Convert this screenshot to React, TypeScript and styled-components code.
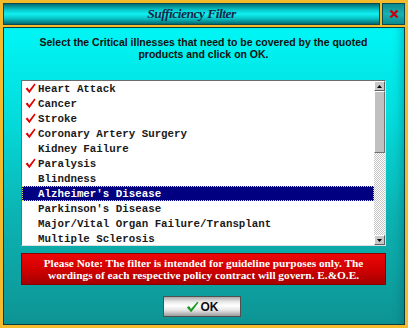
import { createGlobalStyle } from 'styled-components';
import styled from 'styled-components';

const GlobalStyle = createGlobalStyle`
  html, body {
    margin: 0;
    padding: 0;
    overflow: hidden;
    background: #ffffff;
  }
  * {
    box-sizing: border-box;
  }
`;

const Window = styled.div`
  width: 408px;
  height: 328px;
  padding: 3px;
  background: #f4bc2c;
  display: grid;
  grid-template-rows: 22px 1fr;
  gap: 2px;
`;

const TitleRow = styled.div`
  display: grid;
  grid-template-columns: 1fr 23px;
  gap: 2px;
`;

const TitleBar = styled.div`
  display: flex;
  align-items: center;
  justify-content: center;
  border: 1px solid #0a4a50;
  background: linear-gradient(
    to bottom,
    #036e74 0%,
    #08c8cc 30%,
    #12f0f0 50%,
    #08c4c8 72%,
    #036a70 100%
  );
  font-family: 'Liberation Serif', 'Times New Roman', serif;
  font-weight: bold;
  font-style: italic;
  font-size: 13.5px;
  letter-spacing: -0.5px;
  color: #142848;
`;

const CloseButton = styled.button`
  display: flex;
  align-items: center;
  justify-content: center;
  padding: 0;
  border: 1px solid #0a4a50;
  background: linear-gradient(to bottom, #0c8a8e, #18b2b4 50%, #0c8a8e);
  cursor: pointer;
`;

const Body = styled.div`
  display: flex;
  flex-direction: column;
  align-items: stretch;
  padding: 0 18px 0 17px;
  border: 1px solid #0a3c40;
  background: linear-gradient(to bottom, #00f6f6 0%, #04dcdc 30%, #0cb4b4 62%, #0e9494 100%);
  box-shadow: inset -7px 0 8px -5px rgba(0, 70, 80, 0.35);
`;

const Instruction = styled.div`
  margin: 8px 0 20px;
  text-align: center;
  font-family: 'Liberation Sans', Arial, sans-serif;
  font-weight: bold;
  font-size: 10.5px;
  line-height: 12px;
  color: #101010;
`;

const ListBox = styled.div`
  height: 166px;
  display: flex;
  background: #ffffff;
  border-top: 1px solid #6c6c6c;
  border-left: 1px solid #6c6c6c;
  border-right: 1px solid #e0e0e0;
  border-bottom: 1px solid #e0e0e0;
`;

const Items = styled.div`
  flex: 1;
  overflow: hidden;
`;

const Row = styled.div<{ $selected: boolean }>`
  height: 15px;
  display: flex;
  align-items: center;
  padding-left: 3px;
  background: ${p => (p.$selected ? '#000080' : 'transparent')};
  color: ${p => (p.$selected ? '#ffffff' : '#1a1a1a')};
  outline: ${p => (p.$selected ? '1px dotted #f0e040' : 'none')};
  outline-offset: -1px;
  font-family: 'Liberation Mono', 'Courier New', monospace;
  font-weight: bold;
  font-size: 10.8px;
  white-space: nowrap;
`;

const CheckCell = styled.span`
  width: 13px;
  height: 15px;
  display: flex;
  align-items: center;
  flex-shrink: 0;
`;

const Scrollbar = styled.div`
  width: 11px;
  display: flex;
  flex-direction: column;
  background-color: #ffffff;
  background-image: conic-gradient(#c4c4c4 25%, #ffffff 0 50%, #c4c4c4 0 75%, #ffffff 0);
  background-size: 2px 2px;
`;

const ArrowButton = styled.div`
  height: 10px;
  display: flex;
  align-items: center;
  justify-content: center;
  background: #c8c8c8;
  border-top: 1px solid #ffffff;
  border-left: 1px solid #ffffff;
  border-right: 1px solid #606060;
  border-bottom: 1px solid #606060;
`;

const Thumb = styled.div`
  height: 62px;
  background: #c0c0c0;
  border-top: 1px solid #ffffff;
  border-left: 1px solid #ffffff;
  border-right: 1px solid #707070;
  border-bottom: 1px solid #707070;
`;

const Track = styled.div`
  flex: 1;
`;

const NoteBox = styled.div`
  margin-top: 7px;
  height: 32px;
  display: flex;
  align-items: center;
  justify-content: center;
  text-align: center;
  border: 1px solid #8a0000;
  background: linear-gradient(to bottom, #ec0606 0%, #d20000 50%, #a40000 100%);
  font-family: 'Liberation Serif', 'Times New Roman', serif;
  font-weight: bold;
  font-size: 11.3px;
  line-height: 12px;
  color: #ffffff;
`;

const Footer = styled.div`
  margin-top: 11px;
  display: flex;
  justify-content: center;
  padding-right: 3px;
`;

const OkButton = styled.button`
  width: 78px;
  height: 21px;
  display: flex;
  align-items: center;
  justify-content: center;
  gap: 2px;
  padding: 0;
  border: 1px solid #505050;
  background: linear-gradient(
    to bottom,
    #a8a8a8 0%,
    #e8e8e8 25%,
    #ffffff 45%,
    #e4e4e4 70%,
    #9c9c9c 100%
  );
  font-family: 'Liberation Sans', Arial, sans-serif;
  font-weight: bold;
  font-size: 12px;
  color: #101010;
  cursor: pointer;
`;

const illnesses = [
  { name: 'Heart Attack', checked: true },
  { name: 'Cancer', checked: true },
  { name: 'Stroke', checked: true },
  { name: 'Coronary Artery Surgery', checked: true },
  { name: 'Kidney Failure', checked: false },
  { name: 'Paralysis', checked: true },
  { name: 'Blindness', checked: false },
  { name: "Alzheimer's Disease", checked: false },
  { name: "Parkinson's Disease", checked: false },
  { name: 'Major/Vital Organ Failure/Transplant', checked: false },
  { name: 'Multiple Sclerosis', checked: false },
];

const SELECTED = 7;

const RedCheck = () => (
  <svg width="11" height="11" viewBox="0 0 11 11">
    <path d="M0.6 5.8 L2.6 4.6 L4.2 7.2 L9.4 0.6 L10.6 1.6 L4.4 10.2 Z" fill="#e00000" />
  </svg>
);

const GreenCheck = () => (
  <svg width="13" height="12" viewBox="0 0 13 12">
    <path d="M0.8 6.4 L3 5 L5 8 L11.4 0.8 L12.4 1.8 L5.2 11.2 Z" fill="#1a9a20" />
  </svg>
);

const App = () => {
  return (
    <>
      <GlobalStyle />
      <Window>
        <TitleRow>
          <TitleBar>Sufficiency Filter</TitleBar>
          <CloseButton aria-label="Close">
            <svg width="10" height="10" viewBox="0 0 10 10">
              <path d="M1.5 1.5 L8.5 8.5 M8.5 1.5 L1.5 8.5" stroke="#c80010" strokeWidth="2.4" />
            </svg>
          </CloseButton>
        </TitleRow>
        <Body>
          <Instruction>
            Select the Critical illnesses that need to be covered by the quoted
            <br />
            products and click on OK.
          </Instruction>
          <ListBox>
            <Items>
              {illnesses.map((item, i) => (
                <Row key={item.name} $selected={i === SELECTED}>
                  <CheckCell>{item.checked && <RedCheck />}</CheckCell>
                  {item.name}
                </Row>
              ))}
            </Items>
            <Scrollbar>
              <ArrowButton>
                <svg width="5" height="3" viewBox="0 0 5 3">
                  <path d="M2.5 0 L5 3 L0 3 Z" fill="#000" />
                </svg>
              </ArrowButton>
              <Thumb />
              <Track />
              <ArrowButton>
                <svg width="5" height="3" viewBox="0 0 5 3">
                  <path d="M0 0 L5 0 L2.5 3 Z" fill="#000" />
                </svg>
              </ArrowButton>
            </Scrollbar>
          </ListBox>
          <NoteBox>
            Please Note: The filter is intended for guideline purposes only. The
            <br />
            wordings of each respective policy contract will govern. E.&amp;O.E.
          </NoteBox>
          <Footer>
            <OkButton>
              <GreenCheck />
              OK
            </OkButton>
          </Footer>
        </Body>
      </Window>
    </>
  );
};

export default App;
